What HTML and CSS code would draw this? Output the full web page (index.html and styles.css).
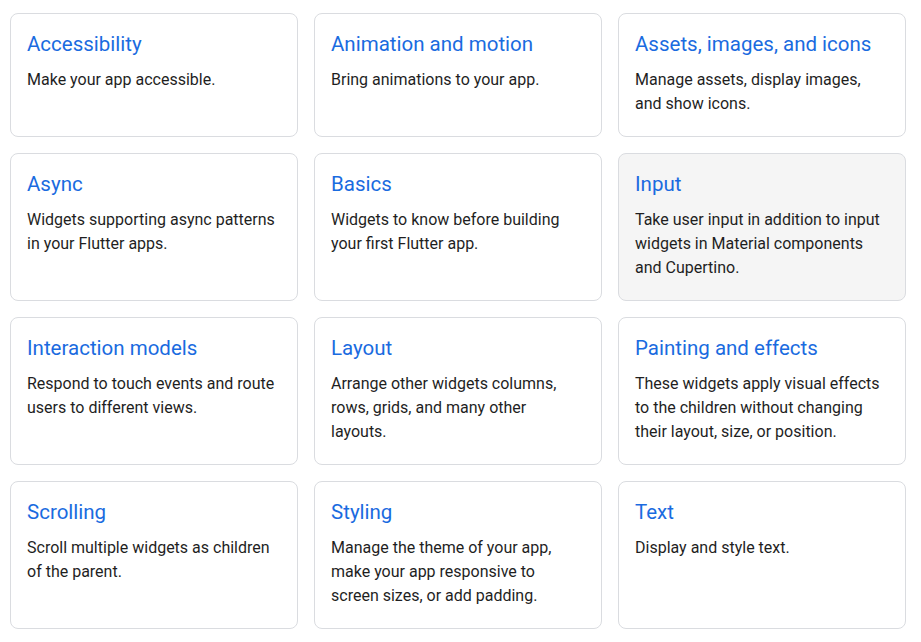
FILE: index.html
```html
<!DOCTYPE html>
<html lang="en">
<head>
<meta charset="utf-8">
<title>Widget catalog</title>
<link rel="stylesheet" href="styles.css">
</head>
<body>
<main class="catalog">
  <a class="card" href="#"><h2 class="card-title">Accessibility</h2><p class="card-text">Make your app accessible.</p></a>
  <a class="card" href="#"><h2 class="card-title">Animation and motion</h2><p class="card-text">Bring animations to your app.</p></a>
  <a class="card" href="#"><h2 class="card-title">Assets, images, and icons</h2><p class="card-text">Manage assets, display images, and show icons.</p></a>
  <a class="card" href="#"><h2 class="card-title">Async</h2><p class="card-text">Widgets supporting async patterns in your Flutter apps.</p></a>
  <a class="card" href="#"><h2 class="card-title">Basics</h2><p class="card-text">Widgets to know before building your first Flutter app.</p></a>
  <a class="card card-hover" href="#"><h2 class="card-title">Input</h2><p class="card-text">Take user input in addition to input widgets in Material components and Cupertino.</p></a>
  <a class="card" href="#"><h2 class="card-title">Interaction models</h2><p class="card-text">Respond to touch events and route users to different views.</p></a>
  <a class="card" href="#"><h2 class="card-title">Layout</h2><p class="card-text">Arrange other widgets columns, rows, grids, and many other layouts.</p></a>
  <a class="card" href="#"><h2 class="card-title">Painting and effects</h2><p class="card-text">These widgets apply visual effects to the children without changing their layout, size, or position.</p></a>
  <a class="card" href="#"><h2 class="card-title">Scrolling</h2><p class="card-text">Scroll multiple widgets as children of the parent.</p></a>
  <a class="card" href="#"><h2 class="card-title">Styling</h2><p class="card-text">Manage the theme of your app, make your app responsive to screen sizes, or add padding.</p></a>
  <a class="card" href="#"><h2 class="card-title">Text</h2><p class="card-text">Display and style text.</p></a>
</main>
</body>
</html>
```
FILE: styles.css
```css
html, body {
  margin: 0;
  background: #ffffff;
}
body {
  padding: 13px 15px 0 10px;
  font-family: Roboto, "Liberation Sans", sans-serif;
  color: #1f1f1f;
}
.catalog {
  display: grid;
  grid-template-columns: repeat(3, 288px);
  column-gap: 16px;
  row-gap: 16px;
}
.card {
  display: block;
  box-sizing: border-box;
  border: 1px solid #dadce0;
  border-radius: 8px;
  padding: 16px 16px 20px;
  text-decoration: none;
  background: #ffffff;
}
.card-hover {
  background: #f5f5f5;
}
.card-title {
  margin: 0 0 10px;
  font-size: 20.5px;
  line-height: 28px;
  font-weight: 400;
  color: #1a6be0;
}
.card-text {
  margin: 0;
  font-size: 16px;
  line-height: 24px;
  color: #1f1f1f;
}
```
